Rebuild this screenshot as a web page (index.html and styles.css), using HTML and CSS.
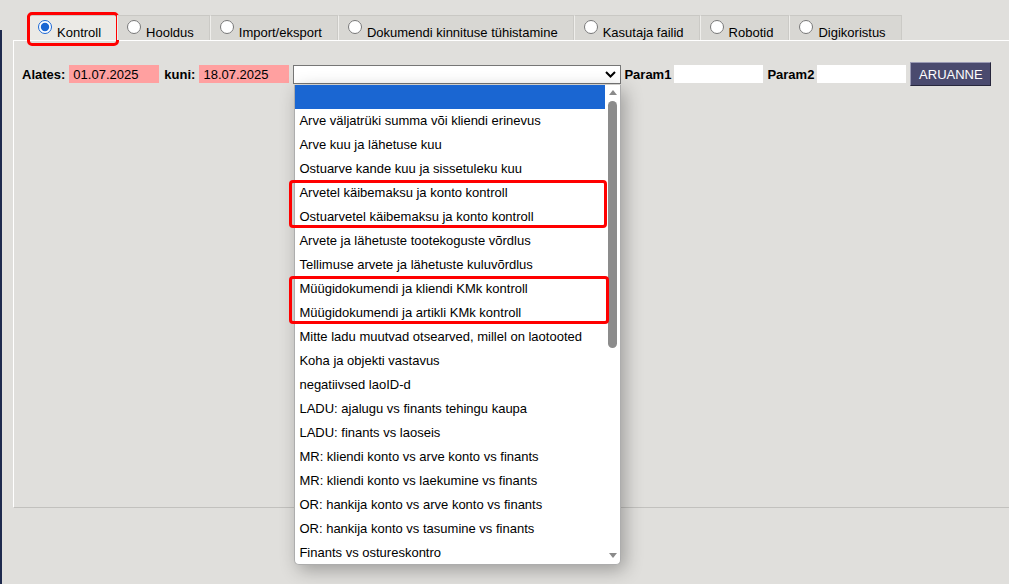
FILE: index.html
```html
<!DOCTYPE html>
<html lang="et">
  <head>
    <meta charset="UTF-8" />
    <meta name="viewport" content="width=device-width, initial-scale=1.0" />
    <title>Kontroll</title>
    <link rel="stylesheet" href="styles.css">
  </head>
  <body>
    <div class="tabs">
      <label class="tab active"><input type="radio" name="tab" checked /><span>Kontroll</span></label>
      <label class="tab"><input type="radio" name="tab" /><span>Hooldus</span></label>
      <label class="tab"><input type="radio" name="tab" /><span>Import/eksport</span></label>
      <label class="tab"><input type="radio" name="tab" /><span>Dokumendi kinnituse tühistamine</span></label>
      <label class="tab"><input type="radio" name="tab" /><span>Kasutaja failid</span></label>
      <label class="tab"><input type="radio" name="tab" /><span>Robotid</span></label>
      <label class="tab"><input type="radio" name="tab" /><span>Digikoristus</span></label>
    </div>

    <div class="panel">
      <div class="filter-row">
        <span class="lbl">Alates:</span>
        <input type="text" class="date-input" value="01.07.2025" />
        <span class="lbl lbl-kuni">kuni:</span>
        <input type="text" class="date-input" value="18.07.2025" />

        <div class="report-select">
          <svg class="chevron" width="11" height="7" viewBox="0 0 11 7">
            <path d="M1 1 L5.5 5.5 L10 1" fill="none" stroke="#000" stroke-width="2" />
          </svg>
          <div class="dropdown">
            <div class="options">
              <div class="opt selected"></div>
              <div class="opt">Arve väljatrüki summa või kliendi erinevus</div>
              <div class="opt">Arve kuu ja lähetuse kuu</div>
              <div class="opt">Ostuarve kande kuu ja sissetuleku kuu</div>
              <div class="opt">Arvetel käibemaksu ja konto kontroll</div>
              <div class="opt">Ostuarvetel käibemaksu ja konto kontroll</div>
              <div class="opt">Arvete ja lähetuste tootekoguste võrdlus</div>
              <div class="opt">Tellimuse arvete ja lähetuste kuluvõrdlus</div>
              <div class="opt">Müügidokumendi ja kliendi KMk kontroll</div>
              <div class="opt">Müügidokumendi ja artikli KMk kontroll</div>
              <div class="opt">Mitte ladu muutvad otsearved, millel on laotooted</div>
              <div class="opt">Koha ja objekti vastavus</div>
              <div class="opt">negatiivsed laoID-d</div>
              <div class="opt">LADU: ajalugu vs finants tehingu kaupa</div>
              <div class="opt">LADU: finants vs laoseis</div>
              <div class="opt">MR: kliendi konto vs arve konto vs finants</div>
              <div class="opt">MR: kliendi konto vs laekumine vs finants</div>
              <div class="opt">OR: hankija konto vs arve konto vs finants</div>
              <div class="opt">OR: hankija konto vs tasumine vs finants</div>
              <div class="opt">Finants vs ostureskontro</div>
            </div>
            <div class="scrollbar">
              <span class="arrow-up"></span>
              <span class="thumb"></span>
              <span class="arrow-down"></span>
            </div>
            <!-- red annotation frames -->
            <div class="mark mark-vat"></div>
            <div class="mark mark-kmk"></div>
          </div>
        </div>

        <span class="lbl lbl-param">Param1</span>
        <input type="text" class="param-input" />
        <span class="lbl lbl-param2">Param2</span>
        <input type="text" class="param-input" />
        <button class="report-btn">ARUANNE</button>
      </div>
    </div>
  </body>
</html>
```

FILE: styles.css
```css
body {
  margin: 0;
  height: 584px;
  font-family: "Liberation Sans", Arial, sans-serif;
  font-size: 13px;
  color: #000;
  background: linear-gradient(#1f2a4e, #1f2a4e) 0 30px / 2px 100% no-repeat,
    #e0dfdc;
  overflow: hidden;
}

.tabs {
  display: flex;
  padding: 15px 0 0 28px;
  height: 25px;
}

.tab {
  position: relative;
  display: flex;
  align-items: flex-end;
  gap: 5px;
  height: 24px;
  padding: 0 15px 0 9px;
  background-color: #d8d7d3;
  border-top: 1px solid #c9c8c4;
  border-left: 1px solid #efeeeb;
  border-right: 1px solid #cbcac6;
  line-height: 15px;
  white-space: nowrap;
  cursor: pointer;
}

.tab input {
  margin: 0 0 6px 0;
  width: 14px;
  height: 14px;
  accent-color: #1a66d2;
}

.tab.active {
  background-color: #ebeae6;
}

.tab.active::after {
  content: "";
  position: absolute;
  top: -4px;
  left: -2px;
  right: -3px;
  bottom: -6px;
  border: 3px solid #f00;
  border-radius: 5px;
}

.panel {
  margin-left: 13px;
  height: 466px;
  border-top: 1px solid #fff;
  border-left: 1px solid #fff;
  border-bottom: 1px solid #c2c1be;
}

.filter-row {
  display: flex;
  align-items: center;
  height: 24px;
  padding: 21px 0 0 8px;
}

.lbl {
  font-weight: bold;
  white-space: nowrap;
}

.date-input,
.param-input {
  box-sizing: border-box;
  height: 18px;
  border: none;
  padding: 0 4px;
  font-family: inherit;
  font-size: 13px;
  color: #000;
}

.date-input {
  width: 90px;
  margin: 0 0 0 4px;
  background-color: #ffa0a0;
}

.lbl-kuni {
  margin-left: 5px;
}

.date-input + .date-input {
  width: 89px;
}

.report-select {
  position: relative;
  box-sizing: border-box;
  width: 328px;
  height: 19px;
  margin-left: 4px;
  background: #fff;
  border: 1px solid #767676;
  z-index: 2;
}

.chevron {
  position: absolute;
  right: 4px;
  top: 5px;
}

.dropdown {
  position: absolute;
  top: 19px;
  left: 0;
  box-sizing: border-box;
  width: 327px;
  height: 480px;
  display: flex;
  background: #fff;
  border: 1px solid #adadad;
  border-top: none;
  border-radius: 0 0 5px 5px;
  box-shadow: 4px 5px 18px rgba(0, 0, 0, 0.3);
}

.options {
  width: 310px;
}

.opt {
  height: 24px;
  line-height: 24px;
  padding-left: 4px;
  white-space: nowrap;
}

.opt.selected {
  background-color: #1a66d2;
}

.scrollbar {
  flex: 1;
  display: flex;
  flex-direction: column;
  align-items: center;
}

.arrow-up,
.arrow-down {
  width: 0;
  height: 0;
  border-left: 4px solid transparent;
  border-right: 4px solid transparent;
}

.arrow-up {
  margin-top: 5px;
  border-bottom: 5px solid #8a8a8a;
}

.arrow-down {
  margin-top: auto;
  margin-bottom: 6px;
  border-top: 5px solid #8a8a8a;
}

.thumb {
  margin-top: 6px;
  width: 9px;
  height: 247px;
  border-radius: 5px;
  background-color: #8c8c8c;
}

.mark {
  position: absolute;
  left: -6px;
  box-sizing: border-box;
  height: 48px;
  border: 3px solid #f00;
  border-radius: 4px;
}

.mark-vat {
  top: 95px;
  width: 318px;
}

.mark-kmk {
  top: 191px;
  width: 320px;
}

.lbl-param {
  margin-left: 3px;
}

.param-input {
  width: 89px;
  margin-left: 3px;
  background-color: #fff;
}

.lbl-param2 {
  margin-left: 4px;
}

.report-btn {
  box-sizing: border-box;
  width: 81px;
  height: 24px;
  margin-left: 4px;
  padding: 0;
  background-color: #4a4a6e;
  border: 1px solid;
  border-color: #9a9ab4 #26263c #26263c #9a9ab4;
  color: #fff;
  font-family: inherit;
  font-size: 13px;
  cursor: pointer;
}
```
